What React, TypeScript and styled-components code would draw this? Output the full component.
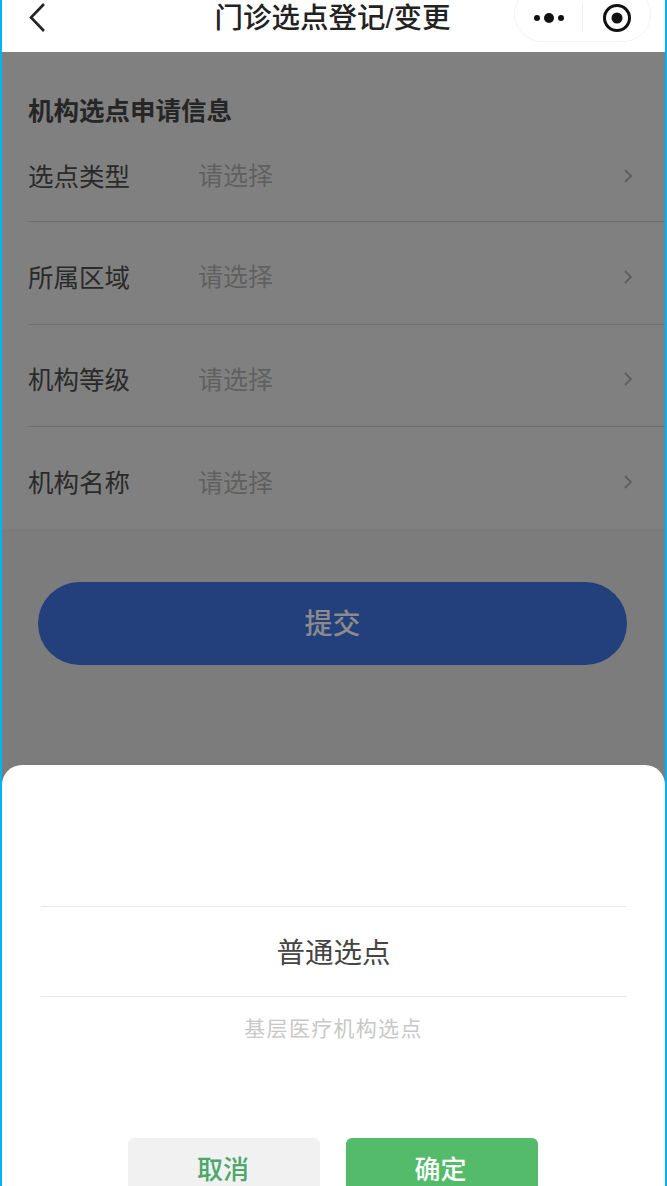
import React from 'react'
import styled, { createGlobalStyle } from 'styled-components'

const GlobalStyle = createGlobalStyle`
  html, body {
    margin: 0;
    padding: 0;
    background: #00b4f2;
  }
  * {
    box-sizing: border-box;
  }
`

const Page = styled.div`
  position: relative;
  margin: 0 2px;
  width: 663px;
  height: 1186px;
  overflow: hidden;
  background: #7c7c7c;
  font-family: 'Liberation Sans', 'Noto Sans CJK SC', sans-serif;
`

const NavBar = styled.div`
  position: relative;
  display: flex;
  justify-content: center;
  height: 52px;
  background: #fff;
`

const BackButton = styled.div`
  position: absolute;
  left: 24px;
  top: 2px;
  display: flex;
`

const NavTitle = styled.div`
  margin-left: -2px;
  font-size: 28.5px;
  font-weight: 500;
  line-height: 36px;
  color: #222;
`

const Capsule = styled.div`
  position: absolute;
  right: 14px;
  top: -14px;
  display: flex;
  align-items: center;
  width: 137px;
  height: 56px;
  border: 1px solid #f4f4f4;
  border-radius: 28px;
  background: #fff;
`

const CapsuleCell = styled.div`
  flex: 1;
  display: flex;
  align-items: center;
  justify-content: center;
  padding-top: 8px;
`

const CapsuleDivider = styled.div`
  width: 1px;
  height: 28px;
  margin-top: 8px;
  background: #eee;
`

const Section = styled.section`
  height: 477px;
  padding: 43px 0 0 26px;
  background: #808080;
`

const SectionTitle = styled.h2`
  margin: 0;
  font-size: 25.5px;
  line-height: 32px;
  font-weight: 700;
  color: #262626;
`

const Row = styled.div<{ $last?: boolean }>`
  display: flex;
  align-items: center;
  height: 102.6px;
  padding: 5px 31px 0 0;
  border-bottom: ${p => (p.$last ? 'none' : '1px solid #707070')};
  &:first-of-type {
    height: 95px;
    padding-top: 0;
  }
`

const RowLabel = styled.span`
  width: 170px;
  font-size: 25.5px;
  color: #2a2a2a;
`

const RowValue = styled.span`
  flex: 1;
  font-size: 25px;
  color: #606060;
`

const RowArrow = styled.svg`
  margin-top: 3px;
`

const SubmitButton = styled.div`
  display: flex;
  align-items: center;
  justify-content: center;
  margin: 53px 38px 0 36px;
  height: 83px;
  padding-bottom: 3px;
  border-radius: 42px;
  background: #23407c;
  font-size: 28px;
  font-weight: 500;
  color: #8b8b8b;
`

const Sheet = styled.div`
  position: absolute;
  left: 0;
  right: 0;
  top: 765px;
  bottom: 0;
  display: flex;
  flex-direction: column;
  align-items: center;
  padding-top: 141px;
  border-radius: 20px 20px 0 0;
  background: #fff;
`

const Picked = styled.div`
  flex-shrink: 0;
  display: flex;
  align-items: center;
  justify-content: center;
  width: 586px;
  height: 91px;
  padding-bottom: 2px;
  border-top: 1px solid #e8e8e8;
  border-bottom: 1px solid #e8e8e8;
  font-size: 28.5px;
  color: #454545;
`

const Option = styled.div`
  flex-shrink: 0;
  display: flex;
  align-items: center;
  justify-content: center;
  height: 66px;
  padding-bottom: 6px;
  font-size: 21px;
  letter-spacing: 1.3px;
  color: #c8c8c8;
`

const Actions = styled.div`
  flex-shrink: 0;
  display: flex;
  gap: 26px;
  margin-top: 75px;
  margin-left: -1px;
`

const ActionButton = styled.div<{ $primary?: boolean }>`
  display: flex;
  justify-content: center;
  width: 192px;
  height: 70px;
  padding: 12px ${p => (p.$primary ? '3px' : '2px')} 0 0;
  border-radius: 6px;
  background: ${p => (p.$primary ? '#54bb6a' : '#f1f1f1')};
  color: ${p => (p.$primary ? '#fff' : '#4ca76a')};
  font-size: 26px;
  font-weight: 500;
  line-height: 40px;
`

const Chevron = () => (
  <RowArrow width='12' height='18' viewBox='0 0 12 18' fill='none'>
    <path d='M3 3L9 9L3 15' stroke='#5e5e5e' strokeWidth='1.8' />
  </RowArrow>
)

const rows = ['选点类型', '所属区域', '机构等级', '机构名称']

const App = () => (
  <Page>
    <GlobalStyle />
    <NavBar>
      <BackButton>
        <svg width='24' height='32' viewBox='0 0 24 32' fill='none'>
          <path d='M18 2L5 15.5L18 29' stroke='#222' strokeWidth='2.6' />
        </svg>
      </BackButton>
      <NavTitle>门诊选点登记/变更</NavTitle>
      <Capsule>
        <CapsuleCell>
          <svg width='36' height='14' viewBox='0 0 36 14' fill='#111'>
            <circle cx='6' cy='7' r='3' />
            <circle cx='18' cy='7' r='5' />
            <circle cx='30' cy='7' r='3' />
          </svg>
        </CapsuleCell>
        <CapsuleDivider />
        <CapsuleCell>
          <svg width='30' height='30' viewBox='0 0 30 30' fill='none'>
            <circle cx='15' cy='15' r='12.5' stroke='#111' strokeWidth='3' />
            <circle cx='15' cy='15' r='5.5' fill='#111' />
          </svg>
        </CapsuleCell>
      </Capsule>
    </NavBar>
    <Section>
      <SectionTitle>机构选点申请信息</SectionTitle>
      {rows.map((label, i) => (
        <Row key={label} $last={i === rows.length - 1}>
          <RowLabel>{label}</RowLabel>
          <RowValue>请选择</RowValue>
          <Chevron />
        </Row>
      ))}
    </Section>
    <SubmitButton>提交</SubmitButton>
    <Sheet>
      <Picked>普通选点</Picked>
      <Option>基层医疗机构选点</Option>
      <Actions>
        <ActionButton>取消</ActionButton>
        <ActionButton $primary>确定</ActionButton>
      </Actions>
    </Sheet>
  </Page>
)

export default App
